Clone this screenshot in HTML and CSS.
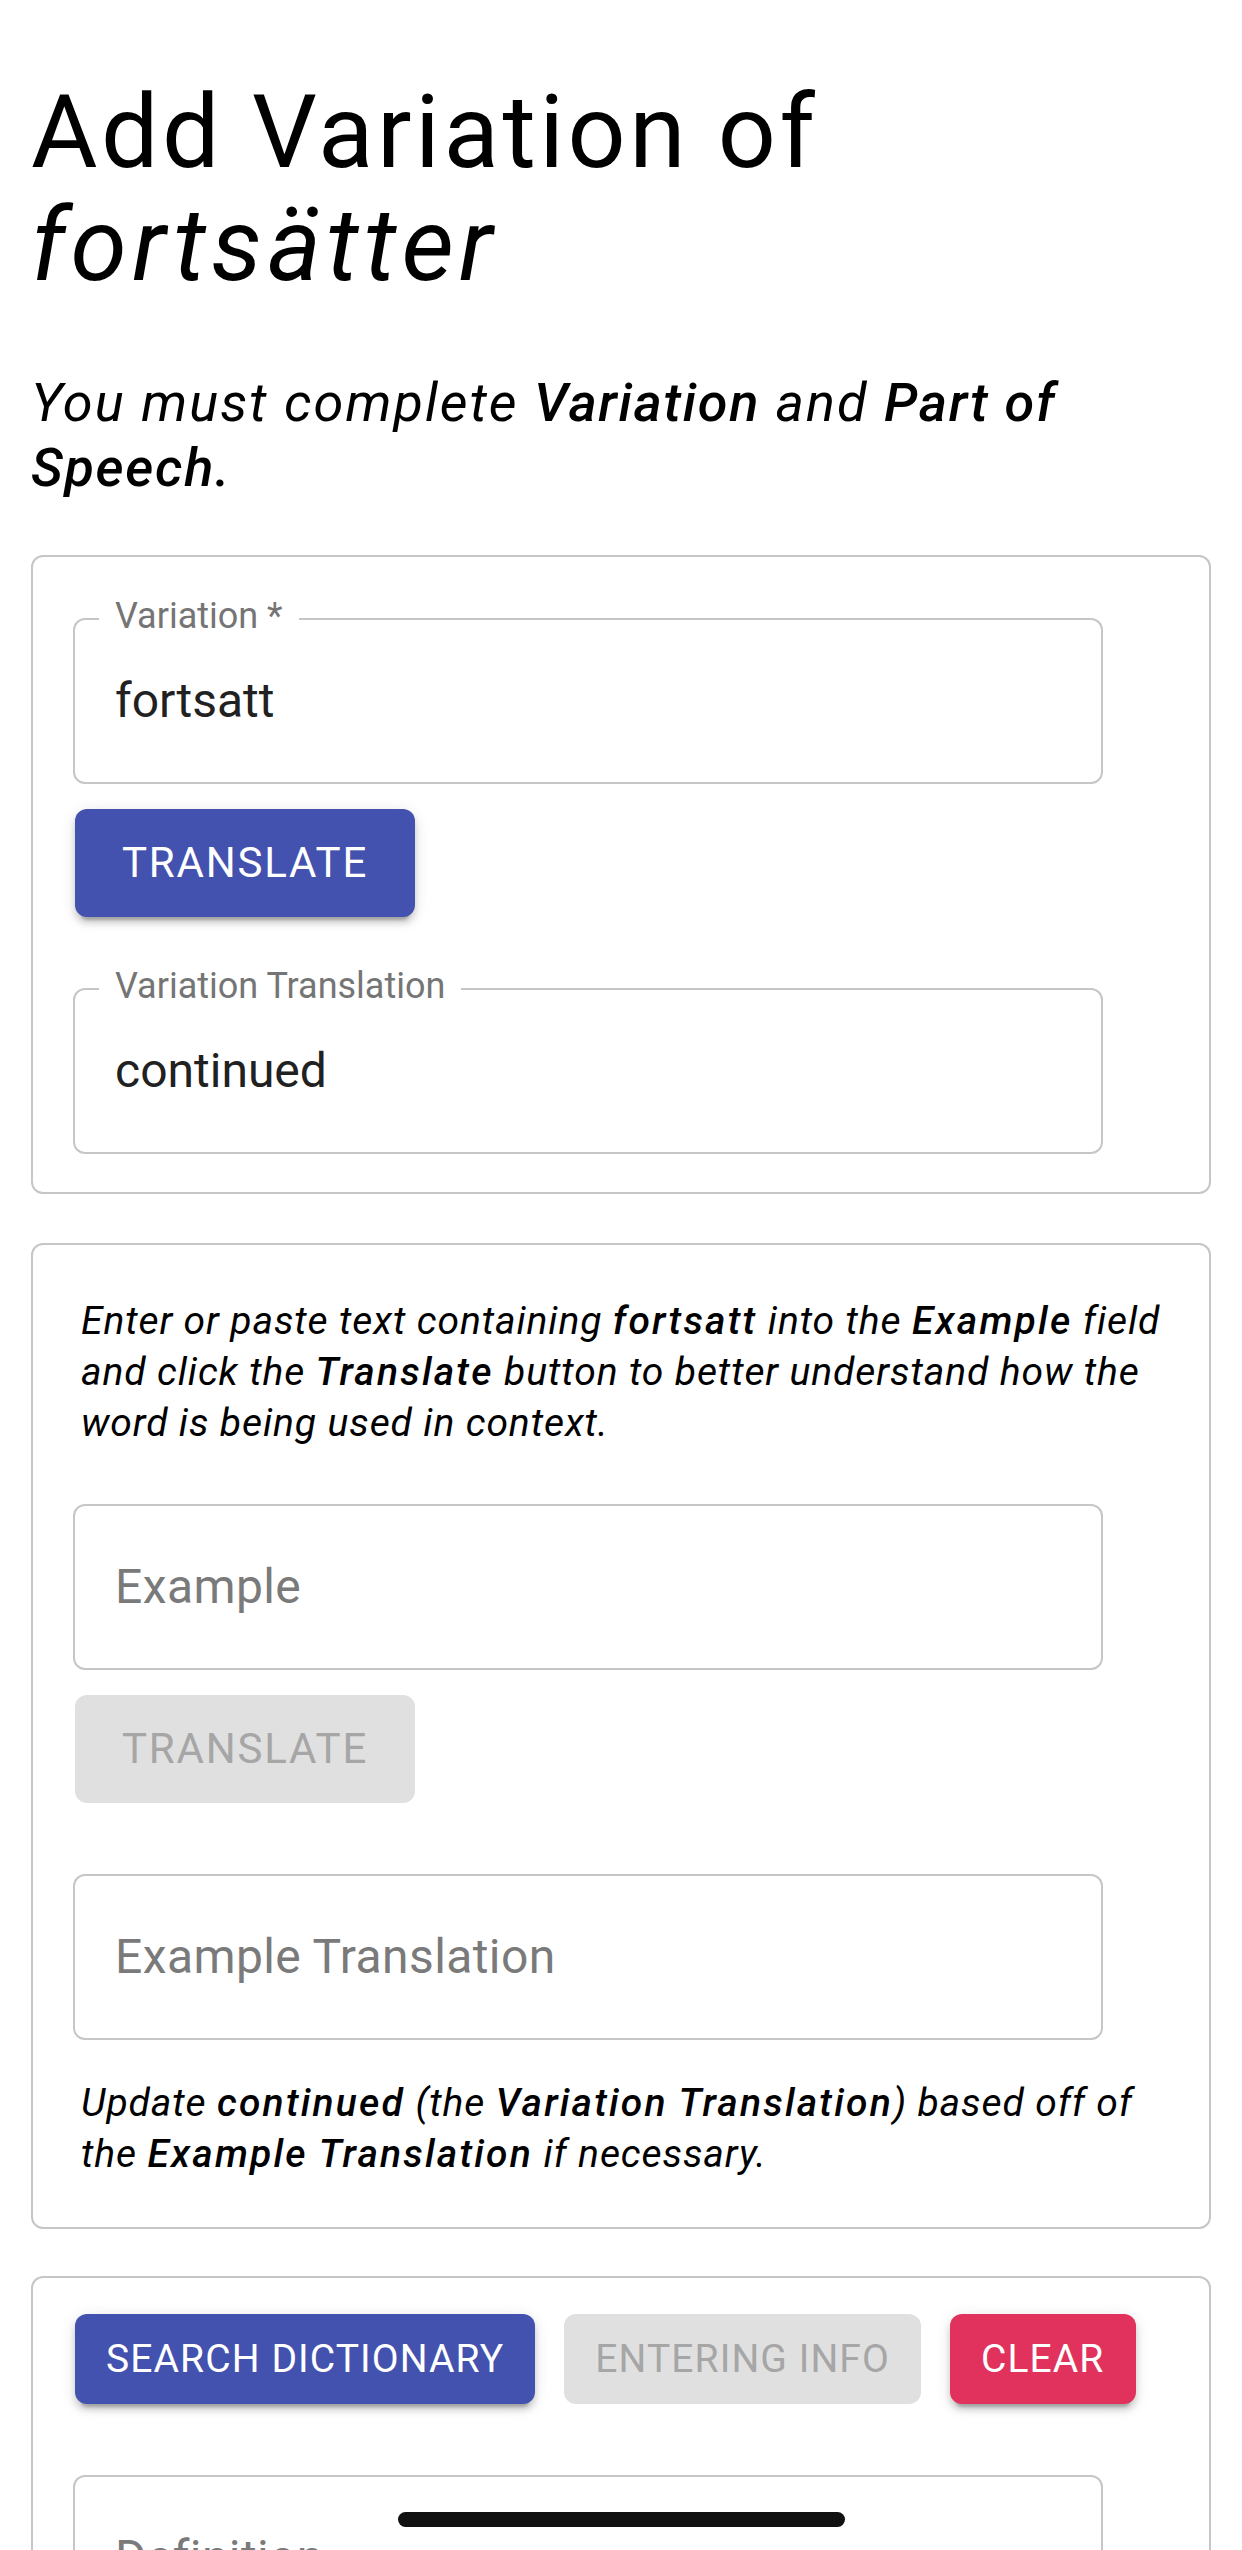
FILE: index.html
```html
<!DOCTYPE html>
<html lang="en">
<head>
<meta charset="utf-8">
<title>Add Variation</title>
<link rel="stylesheet" href="styles.css">
</head>
<body>
<main class="page">
  <h1 class="title">Add Variation of <em>fortsätter</em></h1>
  <p class="subtitle">You must complete <b>Variation</b> and <b>Part of Speech.</b></p>

  <section class="card card-variation">
    <div class="field">
      <span class="float-label">Variation *</span>
      <span class="value">fortsatt</span>
    </div>
    <button class="btn btn-primary">TRANSLATE</button>
    <div class="field field-gap">
      <span class="float-label">Variation Translation</span>
      <span class="value">continued</span>
    </div>
  </section>

  <section class="card card-example">
    <p class="hint">Enter or paste text containing <b>fortsatt</b> into the <b>Example</b> field and click the <b>Translate</b> button to better understand how the word is being used in context.</p>
    <div class="field field-first">
      <span class="placeholder">Example</span>
    </div>
    <button class="btn btn-disabled">TRANSLATE</button>
    <div class="field field-gap">
      <span class="placeholder">Example Translation</span>
    </div>
    <p class="hint hint-bottom">Update <b>continued</b> (the <b>Variation Translation</b>) based off of the <b>Example Translation</b> if necessary.</p>
  </section>

  <section class="card card-dictionary">
    <div class="btn-row">
      <button class="btn btn-small btn-primary">SEARCH DICTIONARY</button>
      <button class="btn btn-small btn-disabled">ENTERING INFO</button>
      <button class="btn btn-small btn-danger">CLEAR</button>
    </div>
    <div class="field field-gap">
      <span class="placeholder">Definition</span>
    </div>
    <div class="field field-gap">
      <span class="placeholder">Definition Translation</span>
    </div>
  </section>
</main>
<div class="home-indicator"></div>
</body>
</html>
```

FILE: styles.css
```css
html, body {
  margin: 0;
  padding: 0;
  background: #ffffff;
}

body {
  font-family: Roboto, "Noto Sans", "Liberation Sans", sans-serif;
  color: #000000;
  width: 1242px;
  height: 2550px;
  overflow: hidden;
  position: relative;
}

.page {
  padding: 76px 31px 200px 31px;
}

.title {
  margin: 0;
  font-size: 102px;
  line-height: 113px;
  font-weight: 400;
  letter-spacing: 3.5px;
  color: #000;
}

.title em {
  font-style: italic;
  letter-spacing: 5.2px;
}

.subtitle {
  margin: 68px 0 0 0;
  font-size: 54px;
  line-height: 65px;
  font-style: italic;
  font-weight: 400;
  letter-spacing: 2.1px;
  color: #000;
}

.subtitle b {
  font-weight: 500;
  letter-spacing: 1.7px;
}

.card {
  border: 2px solid #c6c6c6;
  border-radius: 12px;
  background: #fff;
}

.card-variation {
  margin-top: 55px;
  padding: 61px 0 38px 40px;
}

.card-example {
  margin-top: 49px;
  padding: 51px 36px 47px 48px;
}

.card-example .field {
  margin-left: -8px;
}

.card-example .btn {
  margin-left: -6px;
}

.card-dictionary {
  margin-top: 47px;
  padding: 36px 0 60px 40px;
}

.field {
  position: relative;
  box-sizing: border-box;
  width: 1030px;
  height: 166px;
  border: 2px solid #c6c6c6;
  border-radius: 12px;
  display: flex;
  align-items: center;
  padding: 0 40px;
}

.field-first {
  margin-top: 55px;
}

.field-gap {
  margin-top: 71px;
}

.float-label {
  position: absolute;
  top: -22px;
  left: 24px;
  padding: 0 16px;
  background: #fff;
  font-size: 36px;
  line-height: 36px;
  color: #757575;
}

.value {
  font-size: 48px;
  line-height: 48px;
  color: #212121;
}

.placeholder {
  font-size: 48px;
  line-height: 48px;
  letter-spacing: 0.4px;
  color: #7a7a7a;
}

.btn {
  display: block;
  box-sizing: border-box;
  margin: 25px 0 0 2px;
  height: 108px;
  padding: 0 47px;
  border: none;
  border-radius: 12px;
  font-family: Roboto, "Noto Sans", "Liberation Sans", sans-serif;
  font-size: 42px;
  font-weight: 400;
  letter-spacing: 1.8px;
  line-height: 1;
  cursor: pointer;
}

.btn-primary {
  background: #4352ae;
  color: #fff;
  box-shadow: 0 9px 3px -6px rgba(0,0,0,0.2), 0 6px 6px 0 rgba(0,0,0,0.14), 0 3px 15px 0 rgba(0,0,0,0.12);
}

.btn-disabled {
  background: #e0e0e0;
  color: #a6a6a6;
}

.btn-danger {
  background: #e0325c;
  color: #fff;
  box-shadow: 0 9px 3px -6px rgba(0,0,0,0.2), 0 6px 6px 0 rgba(0,0,0,0.14), 0 3px 15px 0 rgba(0,0,0,0.12);
}

.btn-row {
  display: flex;
  gap: 29px;
  margin-left: 2px;
}

.btn-small {
  margin: 0;
  height: 90px;
  padding: 0 31px;
  font-size: 39px;
  letter-spacing: 1.1px;
}

.hint {
  margin: 0;
  font-size: 39px;
  line-height: 51px;
  font-style: italic;
  letter-spacing: 0.9px;
  color: #000;
}

.hint b {
  font-weight: 500;
  letter-spacing: 2.2px;
}

.hint-bottom {
  margin-top: 38px;
}

.home-indicator {
  position: absolute;
  left: 398px;
  top: 2512px;
  width: 447px;
  height: 15px;
  border-radius: 8px;
  background: #111;
}
```
